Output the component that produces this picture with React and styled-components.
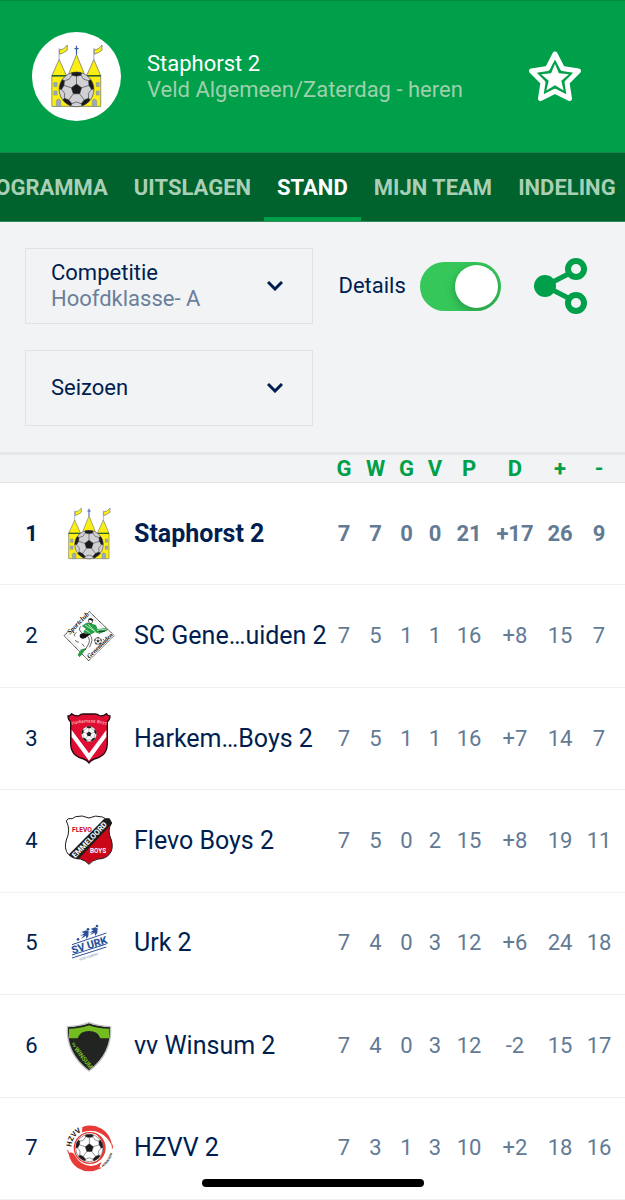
import React, { useEffect, useId, useRef, useState } from 'react'
import styled, { createGlobalStyle } from 'styled-components'

const GlobalStyle = createGlobalStyle`
  * {
    box-sizing: border-box;
  }

  body {
    margin: 0;
    background: #ffffff;
    color: #001e50;
    font-family: Roboto, "Liberation Sans", sans-serif;
    font-size: 22px;
    line-height: 26px;
  }

  button, select, input {
    font: inherit;
    color: inherit;
  }
`

const Screen = styled.div`
  display: flex;
  flex-direction: column;
  min-height: 100vh;
`

const Header = styled.header`
  display: flex;
  align-items: center;
  gap: 26px;
  padding: 31px 44px 31px 32px;
  background: #009f4a;
  border-top: 1px solid #008a40;
  border-bottom: 1px solid #168646;
`

const Avatar = styled.div`
  display: flex;
  align-items: center;
  justify-content: center;
  flex: none;
  width: 89px;
  height: 89px;
  border-radius: 50%;
  background: #ffffff;
`

const TeamTitle = styled.div`
  flex: 1;
  min-width: 0;
`

const TeamName = styled.h1`
  margin: 0;
  font-size: 22px;
  font-weight: 400;
  color: #ffffff;
`

const TeamInfo = styled.p`
  margin: 0;
  color: #9fd0ac;
`

const IconButton = styled.button`
  display: flex;
  flex: none;
  padding: 0;
  border: 0;
  background: none;
  cursor: pointer;
`

const Tabs = styled.nav`
  position: relative;
  display: flex;
  overflow-x: auto;
  scrollbar-width: none;
  background: #00622d;
  border-bottom: 1px solid #2f8a58;
`

const Tab = styled.a`
  flex: none;
  padding: 22px 13px 16px;
  border-bottom: 4px solid ${({ $active }) => ($active ? '#009f4a' : 'transparent')};
  color: ${({ $active }) => ($active ? '#ffffff' : '#a9cfb5')};
  font-weight: 700;
  text-decoration: none;
`

const Filters = styled.section`
  display: grid;
  grid-template-columns: 1fr 1fr;
  gap: 26px 0;
  padding: 26px 25px;
  background: #f1f3f5;
`

const Field = styled.label`
  display: flex;
  align-items: center;
  height: 76px;
  padding: 0 29px 0 25px;
  border: 1px solid #e0e3e5;
`

const FieldText = styled.span`
  display: flex;
  flex: 1;
  flex-direction: column;
  min-width: 0;
`

const Select = styled.select`
  width: 100%;
  height: 26px;
  padding: 0;
  border: 0;
  appearance: none;
  background: none;
  color: ${({ $muted }) => ($muted ? '#6b7f99' : '#001e50')};
`

const Actions = styled.div`
  display: flex;
  align-items: center;
  justify-content: space-between;
  padding: 0 12px 0 26px;
`

const SwitchLabel = styled.label`
  display: flex;
  align-items: center;
  gap: 14px;
`

const Switch = styled.input`
  appearance: none;
  display: flex;
  align-items: center;
  flex: none;
  width: 81px;
  height: 49px;
  margin: 0;
  padding: 3px;
  border-radius: 25px;
  background: #c9ced4;
  overflow: hidden;
  cursor: pointer;

  &::before {
    content: '';
    width: 43px;
    height: 43px;
    border-radius: 50%;
    background: #ffffff;
    box-shadow: 0 3px 10px rgba(0, 0, 0, 0.25);
  }

  &:checked {
    justify-content: flex-end;
    background: #35c759;
  }
`

const Table = styled.table`
  flex: 1;
  width: 100%;
  table-layout: fixed;
  border-spacing: 0;
`

const Col = styled.col`
  width: ${({ $width }) => ($width ? `${$width}px` : 'auto')};
`

const HeadCell = styled.th`
  height: 31px;
  padding: 0;
  border-top: 3px solid #e3e5e8;
  border-bottom: 1px solid #e3e5e8;
  background: #f1f3f5;
  color: #009f4a;
  font-weight: 700;

  &:last-child {
    padding-right: 6px;
  }
`

const Row = styled.tr`
  font-weight: ${({ $own }) => ($own ? 700 : 400)};
`

const Cell = styled.td`
  height: 102px;
  padding: 0;
  border-bottom: 1px solid #eff0f2;
`

const RankCell = styled(Cell)`
  text-align: center;
`

const NameCell = styled(Cell)`
  font-size: 25px;
  white-space: nowrap;
`

const StatCell = styled(Cell)`
  color: #637a95;
  text-align: center;
  white-space: nowrap;

  &:last-child {
    padding-right: 6px;
  }
`

const LogoSvg = styled.svg`
  display: block;
  flex: none;
`

const HomeIndicator = styled.div`
  position: fixed;
  bottom: 13px;
  left: 50%;
  width: 222px;
  height: 8px;
  border-radius: 4px;
  background: #000000;
  transform: translateX(-50%);
`

const polar = (cx, cy, r, deg) => {
  const a = (deg * Math.PI) / 180
  return [cx + r * Math.cos(a), cy + r * Math.sin(a)]
}

const toPoints = (list) => list.map(([x, y]) => `${x.toFixed(1)},${y.toFixed(1)}`).join(' ')

const star = (cx, cy, outer, inner) =>
  toPoints(Array.from({ length: 10 }, (_, i) => polar(cx, cy, i % 2 ? inner : outer, -90 + i * 36)))

const Ball = ({ cx, cy, r, fill = '#ffffff', line = 1.5 }) => {
  const clip = useId()
  const angles = [0, 1, 2, 3, 4].map((i) => -90 + i * 72)
  const centre = angles.map((a) => polar(cx, cy, r * 0.31, a))

  return (
    <g>
      <clipPath id={clip}>
        <circle cx={cx} cy={cy} r={r} />
      </clipPath>
      <circle cx={cx} cy={cy} r={r} fill={fill} />
      <g clipPath={`url(#${clip})`} stroke="#333333" strokeWidth={line}>
        <polygon points={toPoints(centre)} fill="#1a1a1a" />
        {angles.map((a) => {
          const [x1, y1] = polar(cx, cy, r * 0.31, a)
          const [x2, y2] = polar(cx, cy, r * 0.76, a)
          const [x3, y3] = polar(cx, cy, r * 0.86, a + 18)
          const [x4, y4] = polar(cx, cy, r * 0.72, a + 36)
          const [x5, y5] = polar(cx, cy, r * 0.86, a + 54)
          return (
            <g key={a}>
              <line x1={x1} y1={y1} x2={x2} y2={y2} />
              <polyline points={toPoints([[x3, y3], [x4, y4], [x5, y5]])} fill="none" />
              <polygon
                points={toPoints([
                  [x2, y2],
                  [x3, y3],
                  polar(cx, cy, r * 1.1, a + 16),
                  polar(cx, cy, r * 1.1, a - 16),
                  polar(cx, cy, r * 0.86, a - 18),
                ])}
                fill="#1a1a1a"
              />
            </g>
          )
        })}
      </g>
      <circle cx={cx} cy={cy} r={r} fill="none" stroke="#333333" strokeWidth={line} />
    </g>
  )
}

const StaphorstLogo = () => (
  <>
    <g fill="#fbee10" stroke="#77806a" strokeWidth="2">
      <path d="M17 76H138V152H17Z" />
      <path d="M35 36L53 76H17Z" />
      <path d="M121 36L138 76H103Z" />
      <path d="M78 24L96 68V76H60V68Z" />
      <path d="M36 11Q46 13 55 0V13Q46 20 36 23Z" />
      <path d="M122 11Q132 13 141 0V13Q132 20 122 23Z" />
    </g>
    <path d="M35 8V38M121 8V38" stroke="#8793b5" strokeWidth="2" />
    <path d="M78 2V24M73 9H83" stroke="#35619f" strokeWidth="3" />
    <path d="M17 76H138" stroke="#28622a" strokeWidth="4" />
    <g fill="#9caabf" stroke="#6d7a8b" strokeWidth="1">
      <path d="M22 93h8v10h-8zM22 114h8v10h-8zM127 93h7v10h-7zM127 114h7v10h-7z" />
      <path d="M28 152V138Q33 130 39 138V152ZM117 152V138Q122 130 128 138V152Z" />
    </g>
    <Ball cx={78} cy={110} r={43} fill="#d1d0d5" />
  </>
)

const GenemuidenLogo = () => (
  <>
    <path d="M79 5L154 77L77 152L3 77Z" fill="#ffffff" stroke="#222222" strokeWidth="3" strokeDasharray="4 1" />
    <path d="M79 13L145 77L77 143L12 77Z" fill="none" stroke="#777777" strokeWidth="1" strokeDasharray="3 2" />
    <g fontFamily="Liberation Serif, serif" fontStyle="italic" fontWeight="700" fill="#111111" stroke="#ffffff" strokeWidth="4" paintOrder="stroke">
      <text transform="translate(20 74) rotate(-45)" fontSize="21">Sportclub</text>
      <text transform="translate(79 146) rotate(-44)" fontSize="19">Genemuiden</text>
    </g>
    <g stroke="#157b30" strokeWidth="2">
      <path d="M58 48L72 39L98 46L103 59L128 55L133 60L110 70L96 65L82 73L62 67L69 55Z" fill="#24a447" />
      <path d="M45 135L55 119L68 116L60 127L50 140Z" fill="#24a447" />
    </g>
    <path d="M66 45L98 65M76 43L94 63M63 57L80 68M102 61L130 57" stroke="#ffffff" strokeWidth="2" />
    <path d="M79 40L76 31L84 26L90 31L86 41Z" fill="#ffffff" stroke="#111111" strokeWidth="2" />
    <path d="M75 29Q80 21 91 29L88 33L80 29Z" fill="#111111" />
    <path d="M60 69Q45 73 52 83Q62 91 75 78L83 73Z" fill="#111111" />
    <path d="M74 79Q84 91 75 105L66 120M82 76Q93 88 79 112M57 68Q44 60 53 49M107 64L126 64" fill="none" stroke="#111111" strokeWidth="2" />
    <path d="M40 67Q30 73 36 79M37 90Q39 98 47 96M57 101L64 110" fill="none" stroke="#111111" strokeWidth="2" />
    <Ball cx={105} cy={93} r={11} line={1} />
  </>
)

const HarkemaLogo = () => (
  <>
    <path
      d="M15 9Q22 10 26 2Q35 10 48 8Q54 2 62 3H94Q103 2 109 8Q122 10 130 2Q135 10 141 9Q141 20 133 26V92Q132 116 118 127Q108 136 94 138Q84 141 78 150Q72 141 62 138Q48 136 38 127Q24 116 23 92V26Q15 20 15 9Z"
      fill="#df0d32"
      stroke="#210b12"
      strokeWidth="4"
    />
    <path d="M26 51L78 121L130 51V72L78 143L26 72Z" fill="#ffffff" />
    <path id="harkema-arc" d="M27 36Q78 21 132 36" fill="none" />
    <text fontFamily="Roboto, sans-serif" fontSize="14" fill="#ffd9df">
      <textPath href="#harkema-arc">Harkemase Boys</textPath>
    </text>
    <Ball cx={78} cy={63} r={23} line={1} />
  </>
)

const SHIELD = 'M10 18L16 11Q28 14 38 5Q57 -1 78 9Q98 -1 118 6Q128 14 139 11L146 24Q131 45 145 75Q153 101 139 118Q127 132 105 132Q87 136 78 148Q68 136 52 132Q29 132 16 118Q2 101 10 75Q24 45 10 18Z'

const FlevoLogo = () => {
  const clip = useId()
  return (
    <>
      <clipPath id={clip}>
        <path d={SHIELD} />
      </clipPath>
      <g clipPath={`url(#${clip})`}>
        <path d="M0 0H156V156H0Z" fill="#ffffff" />
        <path d="M156 10V156H20Z" fill="#cb0619" />
        <path d="M10 126L131 4L154 18L33 146Z" fill="#1c1c1c" />
      </g>
      <path d={SHIELD} fill="none" stroke="#241a1a" strokeWidth="3" />
      <g fontFamily="Liberation Sans Narrow, Roboto, sans-serif" fontWeight="700">
        <text x="27" y="51" fontSize="20" fill="#cb0619">FLEVO</text>
        <text x="81" y="115" fontSize="19" fill="#ffffff">BOYS</text>
        <text transform="translate(37 130) rotate(-46)" fontSize="23" fill="#ffffff">EMMELOORD</text>
      </g>
    </>
  )
}

const UrkLogo = () => (
  <>
    <g stroke="#29529a" strokeWidth="3" fill="none">
      <path d="M27 83L130 48M27 114L130 81M27 123L130 90" />
    </g>
    <text transform="translate(29 111) rotate(-17)" fontFamily="Roboto, sans-serif" fontSize="32" fontWeight="800" fill="#29529a">
      SV URK
    </text>
    <text transform="translate(50 131) rotate(-17)" fontFamily="Roboto, sans-serif" fontSize="10" fill="#7189b2">
      HOR VURENT
    </text>
    <g fill="#29529a">
      <circle cx="75" cy="37" r="4" />
      <circle cx="102" cy="27" r="4" />
      <circle cx="45" cy="67" r="4" />
      <path d="M55 45L70 40L77 43L76 58L70 66L69 56L54 66L63 54L51 57L64 49Z" />
      <path d="M83 36L96 31L104 34L103 48L96 57L95 47L80 55L90 45L78 48L91 40Z" />
    </g>
  </>
)

const WinsumLogo = () => (
  <>
    <path d="M78 8Q105 19 143 20Q147 101 78 153Q9 101 13 20Q51 19 78 8Z" fill="#222421" stroke="#bfc2c1" strokeWidth="4" />
    <path d="M78 14Q105 24 139 24V55H112Q105 33 78 33Q51 33 44 55H18V24Q51 24 78 14Z" fill="#73bd20" />
    <path d="M18 24Q51 24 78 14Q105 24 139 24" fill="none" stroke="#222421" strokeWidth="4" />
    <g fontFamily="Roboto, sans-serif" fontWeight="700" fill="#73bd20">
      <text transform="translate(26 70) rotate(64)" fontSize="15">vv</text>
      <text transform="translate(33 88) rotate(52)" fontSize="19">WINSUM</text>
    </g>
  </>
)

const HzvvLogo = () => (
  <>
    <path d="M58 15Q88 4 116 20Q143 36 148 74Q134 43 111 33Q87 20 57 31Z" fill="#e83a36" />
    <path d="M16 93Q30 88 36 101Q51 129 84 132Q101 131 116 120Q108 134 110 140Q76 157 44 138Q23 125 16 93Z" fill="#e83a36" />
    <path d="M14 84L17 94M148 68V80M109 140L115 137" stroke="#e83a36" strokeWidth="3" />
    <circle cx="80" cy="78" r="46" fill="#ffffff" stroke="#e83a36" strokeWidth="4" />
    <path d="M92 31Q128 43 126 83Q121 116 88 125Q118 113 119 79Q119 48 92 31Z" fill="#e83a36" />
    <Ball cx={79} cy={78} r={41} />
    <path id="hzvv-arc" d="M25 75Q27 41 66 22" fill="none" />
    <path id="hzvv-small-arc" d="M119 136Q148 114 151 76" fill="none" />
    <g fontFamily="Roboto, sans-serif" fontWeight="700" fill="#222222">
      <text fontSize="22">
        <textPath href="#hzvv-arc">HZVV</textPath>
      </text>
      <text fontSize="9">
        <textPath href="#hzvv-small-arc">HOOGEVEEN</textPath>
      </text>
    </g>
  </>
)

const logos = {
  staphorst: StaphorstLogo,
  genemuiden: GenemuidenLogo,
  harkema: HarkemaLogo,
  flevo: FlevoLogo,
  urk: UrkLogo,
  winsum: WinsumLogo,
  hzvv: HzvvLogo,
}

const ClubLogo = ({ club, size = 52 }) => {
  const Drawing = logos[club]
  return (
    <LogoSvg width={size} height={size} viewBox="0 0 156 156" aria-hidden="true">
      <Drawing />
    </LogoSvg>
  )
}

const StarIcon = () => (
  <svg width="52" height="52" viewBox="0 0 156 156" aria-hidden="true">
    <polygon points={star(78, 83, 74, 38)} fill="none" stroke="#ffffff" strokeWidth="15" strokeLinejoin="round" />
    <polygon points={star(78, 83, 44, 20)} fill="#ffffff" />
  </svg>
)

const ShareIcon = () => (
  <svg width="54" height="56" viewBox="0 0 54 56" fill="none" stroke="#009f4a" aria-hidden="true">
    <path d="M11 28L42 12M11 28L42 44" strokeWidth="5" />
    <circle cx="11" cy="28" r="11" fill="#009f4a" stroke="none" />
    <circle cx="42" cy="11" r="8" fill="#f1f3f5" strokeWidth="6" />
    <circle cx="42" cy="45" r="8" fill="#f1f3f5" strokeWidth="6" />
  </svg>
)

const Chevron = () => (
  <svg width="16" height="10" viewBox="0 0 16 10" fill="none" aria-hidden="true">
    <path d="M1 1L8 8L15 1" stroke="#001e50" strokeWidth="3" />
  </svg>
)

const tabs = ['PROGRAMMA', 'UITSLAGEN', 'STAND', 'MIJN TEAM', 'INDELING']

const columns = [
  { label: 'G', width: 30 },
  { label: 'W', width: 33 },
  { label: 'G', width: 29 },
  { label: 'V', width: 28 },
  { label: 'P', width: 40 },
  { label: 'D', width: 52 },
  { label: '+', width: 38 },
  { label: '-', width: 46 },
]

const standings = [
  { club: 'staphorst', name: 'Staphorst 2', stats: ['7', '7', '0', '0', '21', '+17', '26', '9'] },
  { club: 'genemuiden', name: 'SC Gene…uiden 2', stats: ['7', '5', '1', '1', '16', '+8', '15', '7'] },
  { club: 'harkema', name: 'Harkem…Boys 2', stats: ['7', '5', '1', '1', '16', '+7', '14', '7'] },
  { club: 'flevo', name: 'Flevo Boys 2', stats: ['7', '5', '0', '2', '15', '+8', '19', '11'] },
  { club: 'urk', name: 'Urk 2', stats: ['7', '4', '0', '3', '12', '+6', '24', '18'] },
  { club: 'winsum', name: 'vv Winsum 2', stats: ['7', '4', '0', '3', '12', '-2', '15', '17'] },
  { club: 'hzvv', name: 'HZVV 2', stats: ['7', '3', '1', '3', '10', '+2', '18', '16'] },
]

const TabBar = () => {
  const [active, setActive] = useState('STAND')
  const barRef = useRef(null)
  const activeRef = useRef(null)

  // keep the active tab in the middle of the bar
  useEffect(() => {
    const bar = barRef.current
    const tab = activeRef.current
    bar.scrollLeft = tab.offsetLeft - (bar.clientWidth - tab.offsetWidth) / 2
  }, [active])

  return (
    <Tabs ref={barRef}>
      {tabs.map((tab) => (
        <Tab
          key={tab}
          href="#"
          ref={tab === active ? activeRef : null}
          $active={tab === active}
          onClick={() => setActive(tab)}
        >
          {tab}
        </Tab>
      ))}
    </Tabs>
  )
}

const Standings = ({ details }) => {
  const shown = details ? columns : []

  return (
    <Table>
      <colgroup>
        <Col $width={63} />
        <Col $width={71} />
        <Col />
        {shown.map((column, i) => (
          <Col key={i} $width={column.width} />
        ))}
      </colgroup>
      <thead>
        <tr>
          <HeadCell />
          <HeadCell />
          <HeadCell />
          {shown.map((column, i) => (
            <HeadCell key={i} scope="col">{column.label}</HeadCell>
          ))}
        </tr>
      </thead>
      <tbody>
        {standings.map((team, index) => (
          <Row key={team.club} $own={index === 0}>
            <RankCell>{index + 1}</RankCell>
            <Cell>
              <ClubLogo club={team.club} />
            </Cell>
            <NameCell>{team.name}</NameCell>
            {shown.map((column, i) => (
              <StatCell key={i}>{team.stats[i]}</StatCell>
            ))}
          </Row>
        ))}
      </tbody>
    </Table>
  )
}

const App = () => {
  const [details, setDetails] = useState(true)

  return (
    <Screen>
      <GlobalStyle />
      <Header>
        <Avatar>
          <ClubLogo club="staphorst" size={63} />
        </Avatar>
        <TeamTitle>
          <TeamName>Staphorst 2</TeamName>
          <TeamInfo>Veld Algemeen/Zaterdag - heren</TeamInfo>
        </TeamTitle>
        <IconButton type="button" aria-label="Favoriet">
          <StarIcon />
        </IconButton>
      </Header>
      <TabBar />
      <Filters>
        <Field>
          <FieldText>
            <span>Competitie</span>
            <Select $muted>
              <option>Hoofdklasse- A</option>
            </Select>
          </FieldText>
          <Chevron />
        </Field>
        <Actions>
          <SwitchLabel>
            Details
            <Switch
              type="checkbox"
              role="switch"
              checked={details}
              onChange={(e) => setDetails(e.target.checked)}
            />
          </SwitchLabel>
          <IconButton type="button" aria-label="Delen">
            <ShareIcon />
          </IconButton>
        </Actions>
        <Field>
          <FieldText>
            <Select aria-label="Seizoen">
              <option>Seizoen</option>
            </Select>
          </FieldText>
          <Chevron />
        </Field>
      </Filters>
      <Standings details={details} />
      <HomeIndicator />
    </Screen>
  )
}

export default App
